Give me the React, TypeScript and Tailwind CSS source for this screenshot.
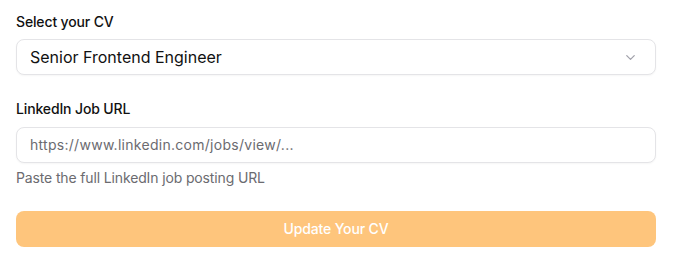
import React from "react";

export default function App() {
  return (
    <div className="w-[684px] h-[275px] bg-white" style={{ fontFamily: "Inter, 'Noto Sans', sans-serif" }}>
      <div className="w-[640px] ml-4 pt-3 flex flex-col">
        <label className="h-5 text-sm leading-5 font-medium text-[#111111] tracking-[-0.01em]">Select your CV</label>
        <div className="mt-[7px] h-9 rounded-lg border border-[#e4e4e7] bg-white shadow-[0_1px_2px_rgba(0,0,0,0.04)] flex items-center justify-between pl-[13px] pr-[17px]">
          <span className="text-base text-[#111111] tracking-[0em]">Senior Frontend Engineer</span>
          <svg width="15" height="15" viewBox="0 0 24 24" fill="none" stroke="#a1a1aa" strokeWidth="2" strokeLinecap="round" strokeLinejoin="round">
            <path d="m6 9 6 6 6-6" />
          </svg>
        </div>
        <label className="mt-6 h-5 text-sm leading-5 font-medium text-[#111111] tracking-[-0.01em]">LinkedIn Job URL</label>
        <div className="mt-2 h-9 rounded-lg border border-[#e4e4e7] bg-white shadow-[0_1px_2px_rgba(0,0,0,0.04)] flex items-center pl-[13px]">
          <span className="text-sm text-[#6b6b70] tracking-[0.02em]">https://www.linkedin.com/jobs/view/...</span>
        </div>
        <p className="mt-[5px] h-5 text-sm leading-5 text-[#6b6b70] tracking-[-0.01em]">Paste the full LinkedIn job posting URL</p>
        <button className="mt-[23px] h-9 rounded-lg bg-[#fec57c] text-white text-sm font-medium tracking-[-0.01em] flex items-center justify-center">
          Update Your CV
        </button>
      </div>
    </div>
  );
}
